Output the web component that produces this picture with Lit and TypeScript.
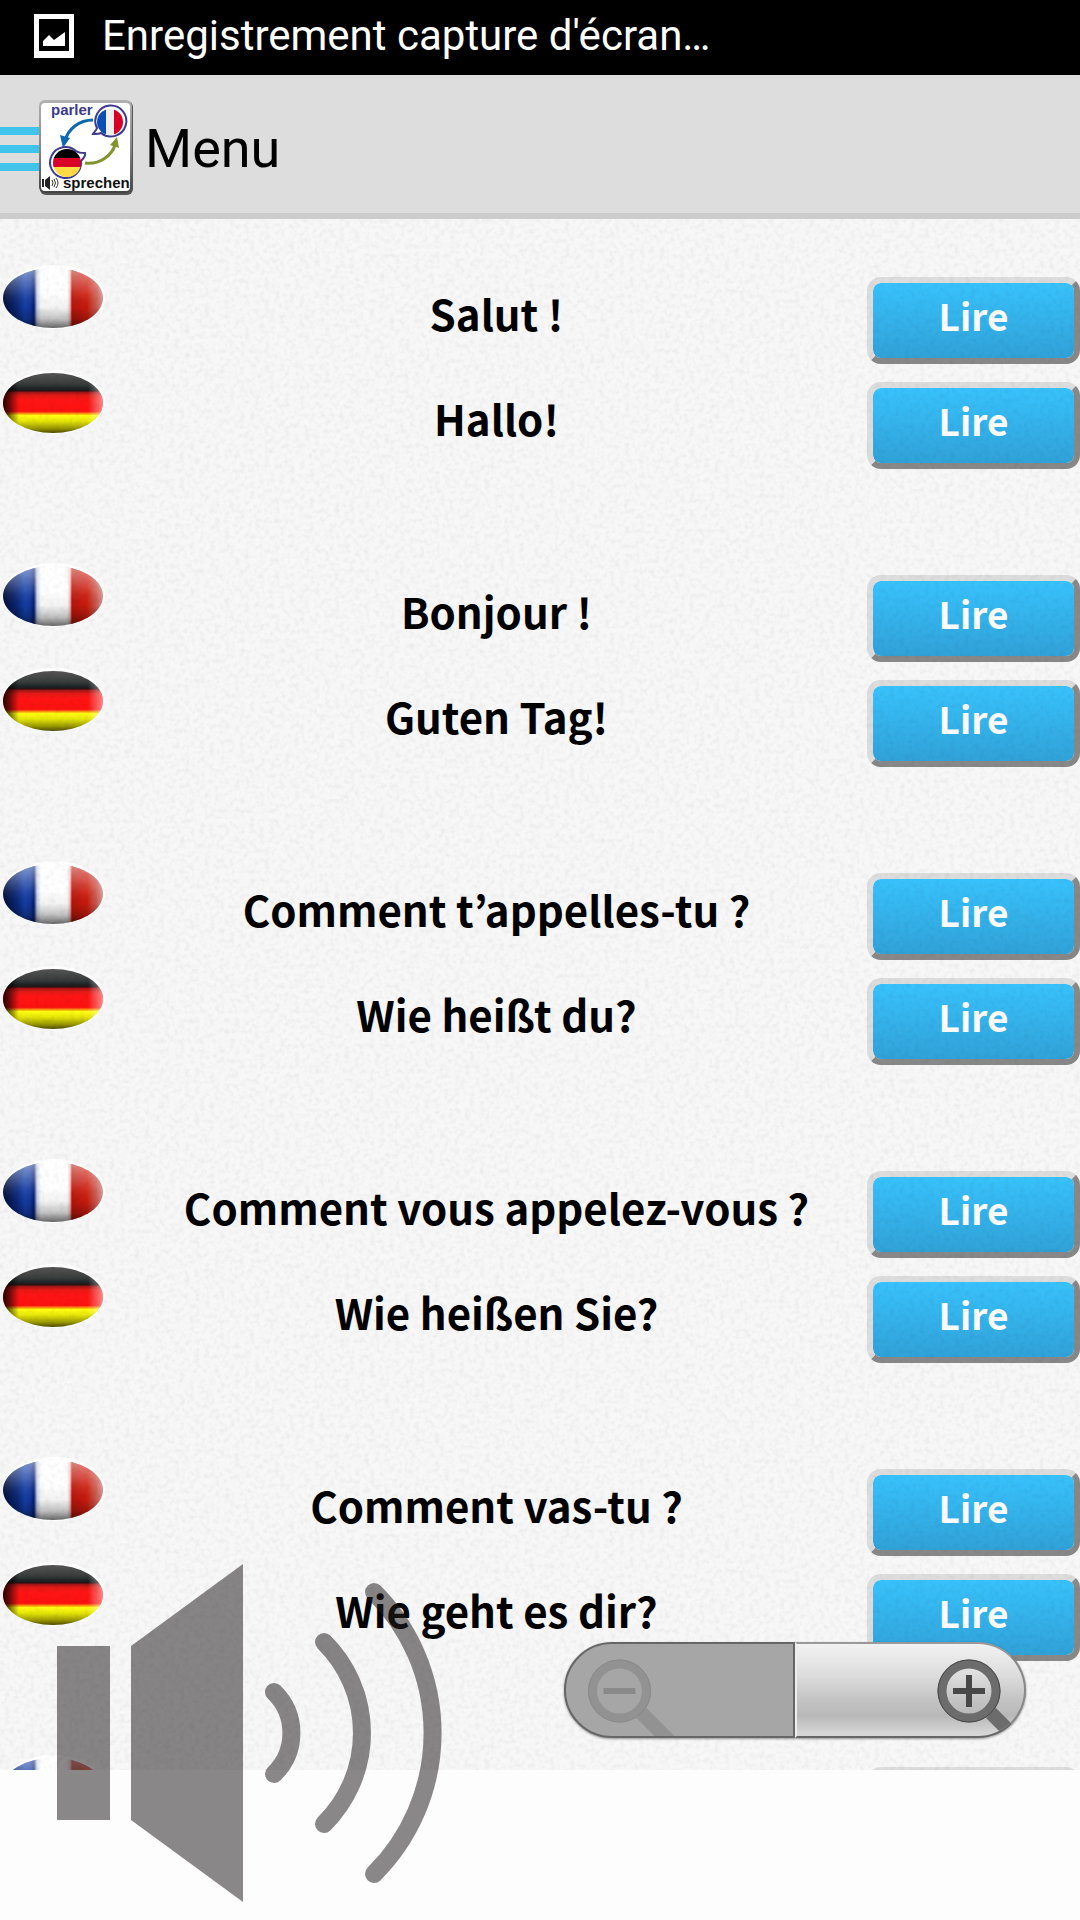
import { LitElement, html, css, svg } from "lit";
import { customElement, state } from "lit/decorators.js";

interface Phrase {
  fr: string;
  de: string;
}

const PHRASES: Phrase[] = [
  { fr: "Salut !", de: "Hallo!" },
  { fr: "Bonjour !", de: "Guten Tag!" },
  { fr: "Comment t’appelles-tu ?", de: "Wie heißt du?" },
  { fr: "Comment vous appelez-vous ?", de: "Wie heißen Sie?" },
  { fr: "Comment vas-tu ?", de: "Wie geht es dir?" },
  { fr: "", de: "" },
];

/* Shared gradients and clip shape for the glossy oval flags. */
const flagDefs = html`
  <svg class="defs" width="0" height="0" aria-hidden="true">
    <defs>
      <clipPath id="oval"><ellipse cx="53" cy="33" rx="50" ry="30" /></clipPath>
      <linearGradient id="fr-bands" x1="0" x2="1" y1="0" y2="0">
        <stop offset="0" stop-color="#020d33" />
        <stop offset=".08" stop-color="#061c5c" />
        <stop offset=".15" stop-color="#0b2a80" />
        <stop offset=".22" stop-color="#1440a8" />
        <stop offset=".27" stop-color="#1238a0" />
        <stop offset=".31" stop-color="#061f70" />
        <stop offset=".34" stop-color="#c8d0ea" />
        <stop offset=".38" stop-color="#ffffff" />
        <stop offset=".64" stop-color="#ffffff" />
        <stop offset=".67" stop-color="#f6c8c4" />
        <stop offset=".69" stop-color="#bd1409" />
        <stop offset=".84" stop-color="#cf1d0e" />
        <stop offset=".93" stop-color="#cf5a50" />
        <stop offset="1" stop-color="#d79a96" />
      </linearGradient>
      <linearGradient id="fr-shade" x1="0" x2="0" y1="0" y2="1">
        <stop offset="0" stop-color="#fff" stop-opacity=".5" />
        <stop offset=".45" stop-color="#fff" stop-opacity=".08" />
        <stop offset=".65" stop-color="#000" stop-opacity=".04" />
        <stop offset=".85" stop-color="#000" stop-opacity=".25" />
        <stop offset="1" stop-color="#000" stop-opacity=".6" />
      </linearGradient>
      <linearGradient id="de-bands" x1="0" x2="0" y1="0" y2="1">
        <stop offset="0" stop-color="#555555" />
        <stop offset=".18" stop-color="#3a3c3c" />
        <stop offset=".26" stop-color="#1c2426" />
        <stop offset=".3" stop-color="#2c1012" />
        <stop offset=".32" stop-color="#9c1616" />
        <stop offset=".38" stop-color="#e51a16" />
        <stop offset=".46" stop-color="#ff1414" />
        <stop offset=".64" stop-color="#fb1210" />
        <stop offset=".68" stop-color="#f8a010" />
        <stop offset=".71" stop-color="#ffff10" />
        <stop offset=".8" stop-color="#e6e60a" />
        <stop offset=".92" stop-color="#9a9800" />
        <stop offset="1" stop-color="#4e4c00" />
      </linearGradient>
      <linearGradient id="de-shade" x1="0" x2="1" y1="0" y2="0">
        <stop offset="0" stop-color="#000" stop-opacity=".85" />
        <stop offset=".06" stop-color="#000" stop-opacity=".6" />
        <stop offset=".16" stop-color="#000" stop-opacity="0" />
        <stop offset=".85" stop-color="#fff" stop-opacity="0" />
        <stop offset="1" stop-color="#fff" stop-opacity=".5" />
      </linearGradient>
    </defs>
  </svg>
`;

const flag = (lang: "fr" | "de") => html`
  <svg class="flag" viewBox="0 0 106 64" role="img" aria-label=${lang === "fr" ? "Français" : "Deutsch"}>
    <ellipse cx="54" cy="32" rx="51" ry="32" fill="#fff" />
    <g clip-path="url(#oval)">
      <rect x="3" y="3" width="100" height="60" fill="url(#${lang}-bands)" />
      <rect x="3" y="3" width="100" height="60" fill="url(#${lang}-shade)" />
    </g>
  </svg>
`;

const lens = (plus: boolean) => svg`
  <circle r="27" fill="none" class="ring" stroke-width="9" />
  <circle r="31" fill="none" class="edge" stroke-width="1" />
  <path d="M-16 0H16${plus ? "M0 -16V16" : ""}" fill="none" class="sign" stroke-width="6" />
`;

@customElement("app-root")
export class AppRoot extends LitElement {
  @state() private spoken = "";

  static styles = css`
    :host {
      display: flex;
      flex-direction: column;
      position: relative;
      height: 100vh;
      background: #fdfdfd;
      color: #000;
      font-family: "Noto Sans CJK KR", "Open Sans", sans-serif;
      overflow: hidden;
    }
    * {
      box-sizing: border-box;
    }
    button {
      font-family: inherit;
      margin: 0;
      padding: 0;
      cursor: pointer;
    }
    svg {
      display: block;
    }
    .defs {
      position: absolute;
    }
    .status {
      display: flex;
      align-items: center;
      gap: 28px;
      height: 75px;
      flex: none;
      padding: 0 34px 4px;
      background: #000;
      color: #fff;
      font: 400 42px/48px Roboto, sans-serif;
    }
    .shot {
      width: 40px;
      height: 44px;
    }
    .appbar {
      display: flex;
      align-items: center;
      flex: none;
      height: 144px;
      padding-top: 8px;
      background: #ddd;
      border-bottom: 6px solid #ccc;
    }
    .home {
      display: flex;
      align-items: center;
      border: 0;
      background: none;
    }
    .drawer {
      display: grid;
      gap: 10px;
      width: 39px;
      padding-top: 2px;
    }
    .drawer span {
      height: 8px;
      background: #41c4ec;
    }
    .logo {
      width: 95px;
      height: 96px;
    }
    .title {
      margin: 0;
      padding: 2px 0 0 11px;
      font: 400 54px/64px Roboto, sans-serif;
    }
    .content {
      position: relative;
      flex: 1;
      min-height: 0;
      overflow: hidden;
      padding-top: 46px;
      background: #f7f7f7;
    }
    .grain {
      position: absolute;
      inset: 0;
      width: 100%;
      height: 100%;
      pointer-events: none;
    }
    .phrases {
      display: grid;
      gap: 94px;
      margin: 0;
      padding: 0;
      list-style: none;
    }
    .pair {
      display: grid;
      gap: 6px;
    }
    .row {
      display: grid;
      grid-template-columns: 126px 1fr 213px;
      height: 99px;
    }
    .flag {
      width: 106px;
      height: 64px;
    }
    .text {
      margin: 0;
      padding-top: 16px;
      text-align: center;
      font-size: 42px;
      line-height: 64px;
      font-weight: 700;
    }
    .read {
      align-self: end;
      height: 87px;
      padding-bottom: 11px;
      border: 6px solid;
      border-color: #ddd #888 #888 #ddd;
      border-radius: 14px;
      background: linear-gradient(#38c2fd, #30a2d8) padding-box;
      color: #fff;
      font-size: 37px;
      line-height: 64px;
      font-weight: 700;
    }
    .strip {
      flex: none;
      height: 150px;
    }
    .speaker {
      position: absolute;
      left: 57px;
      bottom: 18px;
      border: 0;
      background: none;
      opacity: 0.53;
    }
    .speaker svg {
      width: 385px;
      height: 338px;
    }
    .zoom {
      position: absolute;
      right: 54px;
      bottom: 182px;
      display: flex;
      filter: drop-shadow(0 1px 1px #0006);
    }
    .zoom button {
      height: 96px;
      width: 231px;
      overflow: hidden;
      border: 2px solid #666;
    }
    .zoom svg {
      width: 100%;
      height: 100%;
    }
    .out {
      border-radius: 48px 0 0 48px;
      border-right-width: 3px;
      background: #a6a6a6;
    }
    .zoom .in {
      border-color: #999 #888 #666 #eee;
      border-radius: 0 48px 48px 0;
      background: linear-gradient(#f2f2f2, #dcdcdc 35%, #c4c4c4 60%, #b8b8b8 78%, #d6d6d6 97%);
    }
    .out .ring,
    .out .handle {
      stroke: #929292;
    }
    .out .edge,
    .out .sign {
      stroke: #898989;
    }
    .in .ring,
    .in .handle {
      stroke: #6c6c6c;
    }
    .in .edge,
    .in .sign {
      stroke: #484848;
    }
  `;

  private logo() {
    return html`
      <svg class="logo" viewBox="0 0 95 96" aria-hidden="true">
        <defs>
          <linearGradient id="bezel" x1="0" x2="0" y1="0" y2="1">
            <stop offset="0" stop-color="#b0b0b0" />
            <stop offset=".5" stop-color="#8a8a8a" />
            <stop offset="1" stop-color="#444" />
          </linearGradient>
          <clipPath id="disc-fr"><circle cx="71" cy="22" r="13" /></clipPath>
          <clipPath id="disc-de"><circle cx="28" cy="63" r="14" /></clipPath>
        </defs>
        <rect x="1" y="1" width="93" height="94" rx="6" fill="#555" />
        <rect width="93" height="93" rx="6" fill="url(#bezel)" />
        <rect x="2" y="3" width="89" height="88" rx="4" fill="#fff" />
        <text x="12" y="15" font-family="Liberation Sans" font-weight="700" font-size="15" fill="#3b3a8c">parler</text>
        <path d="M54 20C40 20 29 29 26 41" fill="none" stroke="#0f67b1" stroke-width="3" />
        <path d="M21 35l10 3-7 10z" fill="#0f67b1" />
        <path d="M46 63C61 65 73 55 76 45" fill="none" stroke="#81942f" stroke-width="3" />
        <path d="M71 45l7-8 2 11z" fill="#81942f" />
        <path d="M58 28c-1 3-3 4-4 6 3 0 6 0 8-1a15.500 15.500 0 1 0-4-5z" fill="#fff" stroke="#3b3a8c" stroke-width="2" />
        <g clip-path="url(#disc-fr)">
          <rect x="58" y="8" width="9" height="28" fill="#0b4fb3" />
          <rect x="67" y="8" width="8" height="28" fill="#eee" />
          <rect x="75" y="8" width="10" height="28" fill="#d80027" />
        </g>
        <path d="M37 51c3 2 6 2 9 2 1 3-2 6-4 8a15.500 15.500 0 1 1-5-10z" fill="#fff" stroke="#3b3a8c" stroke-width="2" />
        <g clip-path="url(#disc-de)">
          <rect x="14" y="49" width="28" height="9" fill="#000" />
          <rect x="14" y="58" width="28" height="9" fill="#d80027" />
          <rect x="14" y="67" width="28" height="10" fill="#ffda44" />
        </g>
        <path d="M3 79h2v8h-2zM6 80l5-4v14l-5-4z" fill="#222" />
        <path d="M13 80q2 3 0 6M15 79q3 4 0 8M17 78q4 5 0 10" fill="none" stroke="#333" />
        <text x="24" y="88" font-family="Liberation Sans" font-weight="700" font-size="15" fill="#111">sprechen</text>
      </svg>
    `;
  }

  private line(lang: "fr" | "de", text: string) {
    return html`
      <div class="row">
        ${flag(lang)}
        <p class="text" lang=${lang}>${text}</p>
        <button class="read" type="button" aria-label="Lire" @click=${() => (this.spoken = text)}>
          ${text ? "Lire" : ""}
        </button>
      </div>
    `;
  }

  render() {
    return html`
      ${flagDefs}
      <div class="status">
        <svg class="shot" viewBox="0 0 40 44" aria-hidden="true">
          <path d="M0 0h40v44H0z" fill="#fff" />
          <path d="M5 5h30v32H5z" fill="#000" />
          <path d="M9 32v-5l6-6 5 5 11-8v14z" fill="#fff" />
        </svg>
        <span>Enregistrement capture d'écran…</span>
      </div>
      <header class="appbar">
        <button class="home" type="button" aria-label="Menu">
          <span class="drawer"><span></span><span></span><span></span></span>
          ${this.logo()}
        </button>
        <h1 class="title">Menu</h1>
      </header>
      <main class="content">
        <ul class="phrases">
          ${PHRASES.map((p) => html`<li class="pair">${this.line("fr", p.fr)}${this.line("de", p.de)}</li>`)}
        </ul>
        <svg class="grain" aria-hidden="true">
          <filter id="paper" x="0" y="0" width="100%" height="100%">
            <feTurbulence type="fractalNoise" baseFrequency=".2" numOctaves="2" seed="4" />
            <feColorMatrix values="0 0 0 0 0  0 0 0 0 0  0 0 0 0 0  .1 0 0 0 -.042" />
          </filter>
          <rect width="100%" height="100%" filter="url(#paper)" />
        </svg>
      </main>
      <div class="strip"></div>
      <button class="speaker" type="button" aria-label="Volume">
        <svg viewBox="57 1564 385 338">
          <path d="M57 1646h53v174H57zM131 1646l112-82v338l-112-82z" fill="#231f20" />
          <path
            d="M274 1692A57 57 0 0 1 274 1774M324 1642A128 128 0 0 1 324 1824M374 1592A199 199 0 0 1 374 1874"
            fill="none"
            stroke="#231f20"
            stroke-width="18"
            stroke-linecap="round"
          />
        </svg>
      </button>
      <div class="zoom">
        <button class="out" type="button" aria-label="Zoom -">
          <svg viewBox="566 1644 226 92">
            <path class="handle" d="M641 1713l28 28" stroke-width="14" />
            <g transform="translate(619 1691)">${lens(false)}</g>
          </svg>
        </button>
        <button class="in" type="button" aria-label="Zoom +">
          <svg viewBox="797 1644 227 92">
            <path class="handle" d="M991 1713l24 24" stroke-width="14" />
            <g transform="translate(969 1691)">${lens(true)}</g>
          </svg>
        </button>
      </div>
    `;
  }
}
